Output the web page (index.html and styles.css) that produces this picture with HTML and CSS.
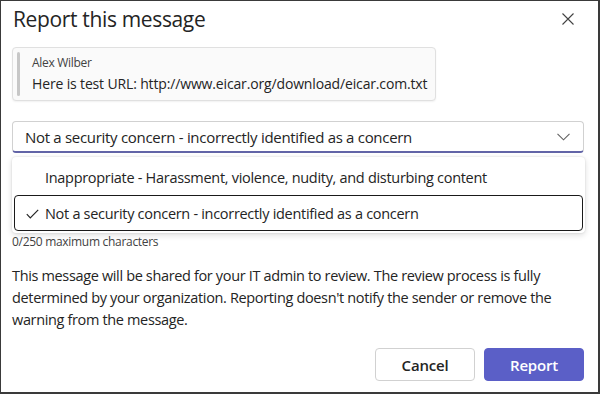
FILE: index.html
```html
<!DOCTYPE html>
<html>
<head>
<meta charset="utf-8">
<link rel="stylesheet" href="styles.css">
</head>
<body>
<div class="frame">
  <div class="header">
    <h1 class="title">Report this message</h1>
    <svg class="close" width="12" height="12" viewBox="0 0 12 12"><path d="M0.5 0.5 L11.5 11.5 M11.5 0.5 L0.5 11.5" stroke="#424242" stroke-width="1.1" fill="none"/></svg>
  </div>
  <div class="quote">
    <div class="quote-bar"></div>
    <div class="quote-body">
      <div class="quote-author">Alex Wilber</div>
      <div class="quote-text">Here is test URL: http://www.eicar.org/download/eicar.com.txt</div>
    </div>
  </div>
  <div class="field">
    <div class="select">
      <span>Not a security concern - incorrectly identified as a concern</span>
      <svg class="chev" width="13" height="8" viewBox="0 0 13 8"><path d="M0.5 0.8 L6.5 6.8 L12.5 0.8" stroke="#616161" stroke-width="1.1" fill="none"/></svg>
    </div>
    <div class="listbox">
      <div class="option">Inappropriate - Harassment, violence, nudity, and disturbing content</div>
      <div class="option selected">
        <svg class="check" width="13" height="10" viewBox="0 0 13 10"><path d="M0.8 5.2 L4.3 8.8 L12.2 0.8" stroke="#242424" stroke-width="1.2" fill="none"/></svg>
        Not a security concern - incorrectly identified as a concern
      </div>
    </div>
    <div class="counter">0/250 maximum characters</div>
  </div>
  <p class="info">This message will be shared for your IT admin to review. The review process is fully determined by your organization. Reporting doesn't notify the sender or remove the warning from the message.</p>
  <div class="actions">
    <button class="btn secondary">Cancel</button>
    <button class="btn primary">Report</button>
  </div>
</div>
</body>
</html>
```
FILE: styles.css
```css
* { box-sizing: border-box; }
html, body { margin: 0; padding: 0; background: #fff; }
body { font-family: "Open Sans", "Noto Sans", sans-serif; color: #242424; }
.frame {
  width: 600px;
  height: 394px;
  border-style: solid;
  border-color: #3a3a3a;
  border-width: 1px 2px 2px 1px;
  padding: 0 14px 0 11px;
  display: flex;
  flex-direction: column;
  position: relative;
}
.header {
  display: flex;
  justify-content: space-between;
  align-items: center;
  height: 36px;
}
.title {
  margin: 0 0 0 1px;
  font-size: 21px;
  font-weight: 500;
  letter-spacing: -0.35px;
  color: #242424;
}
.close { margin-right: 10px; margin-top: 0px; }
.quote {
  margin-top: 10px;
  width: 424px;
  height: 54px;
  border: 1px solid #e0e0e0;
  border-radius: 4px;
  background: #fafafa;
  display: flex;
  padding: 4px 0 4px 4px;
  box-shadow: 0 1px 2px rgba(0,0,0,0.06);
}
.quote-bar { width: 3px; border-radius: 2px; background: #c7c7c7; }
.quote-body { padding-left: 12px; padding-top: 3px; }
.quote-author { font-size: 12px; color: #424242; line-height: 16px; letter-spacing: -0.3px; }
.quote-text { font-size: 14px; line-height: 20px; margin-top: 3px; letter-spacing: -0.15px; }
.field { margin-top: 20px; position: relative; }
.select {
  height: 32px;
  width: 572px;
  border: 1px solid #d1d1d1;
  border-bottom: 2px solid #6264a7;
  border-radius: 4px;
  display: flex;
  align-items: center;
  justify-content: space-between;
  padding: 0 12px 0 12px;
  font-size: 15px;
  letter-spacing: -0.3px;
}
.chev { margin-right: 1px; }
.listbox {
  position: absolute;
  left: 0;
  top: 36px;
  width: 573px;
  height: 76px;
  background: #fff;
  border-radius: 4px;
  box-shadow: 0 0 2px rgba(0,0,0,0.12), 0 2px 6px rgba(0,0,0,0.14);
  padding: 2px 2px;
  z-index: 2;
}
.option {
  height: 36px;
  display: flex;
  align-items: center;
  padding-left: 30px;
  font-size: 14.5px;
  letter-spacing: -0.3px;
  border: 1px solid transparent;
  border-radius: 4px;
  position: relative;
}
.option.selected { border-color: #1a1a1a; margin-top: 0; }
.check { position: absolute; left: 11px; top: 13px; }
.counter {
  margin-top: 80px;
  font-size: 12px;
  color: #424242;
  letter-spacing: -0.3px;
}
.info {
  margin: 15px 0 0 0;
  font-size: 14.5px;
  line-height: 22px;
  letter-spacing: -0.35px;
  color: #242424;
  width: 560px;
}
.actions {
  margin-top: auto;
  margin-bottom: 11px;
  display: flex;
  justify-content: flex-end;
  gap: 9px;
}
.btn {
  font-family: inherit;
  height: 33px;
  width: 100px;
  border-radius: 4px;
  font-size: 15px;
  font-weight: 600;
  letter-spacing: -0.2px;
}
.secondary { background: #fff; border: 1px solid #d1d1d1; color: #242424; }
.primary { background: #5b5fc7; border: 1px solid #5b5fc7; color: #fff; }
```
